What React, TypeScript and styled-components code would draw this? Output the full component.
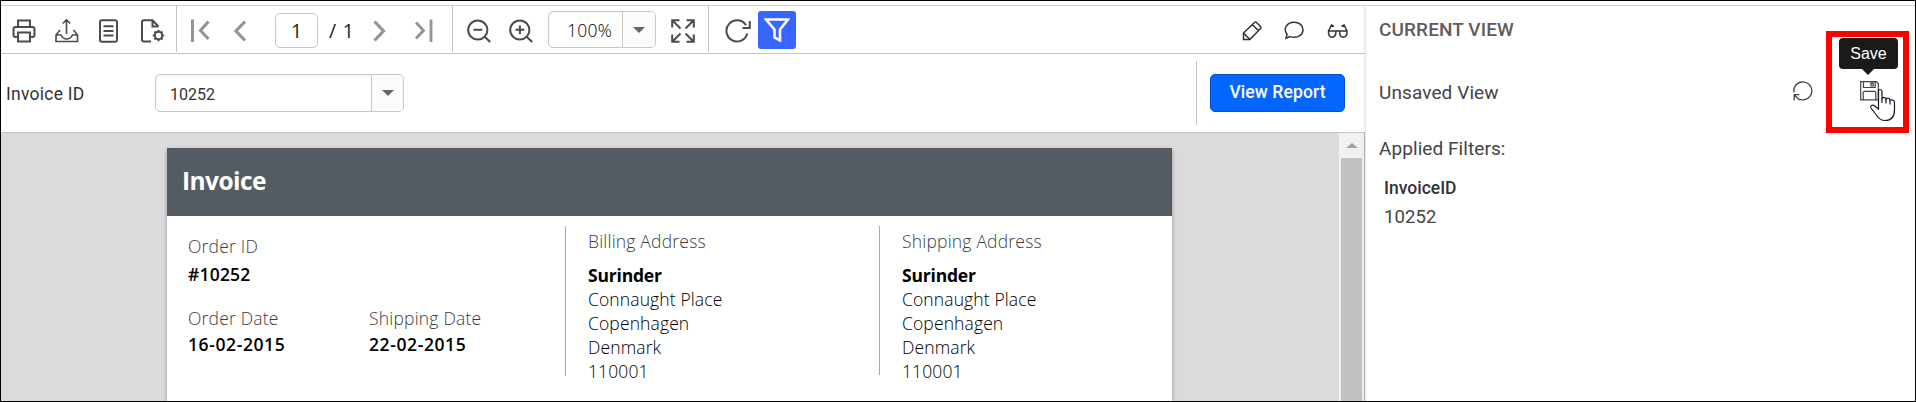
import React from "react";
import styled, { createGlobalStyle, css } from "styled-components";

const Global = createGlobalStyle`
  * { box-sizing: border-box; }
  body { margin: 0; background: #fff; }
`;

const roboto = `Roboto, "Liberation Sans", sans-serif`;
const humanist = `"Open Sans", "Noto Sans", sans-serif`;

const Frame = styled.div`
  position: relative; width: 1916px; height: 402px; border: 1px solid #000; padding-top: 4px;
  overflow: hidden; background: #fff; font-family: ${roboto};
`;
const Shell = styled.div`
  display: flex; height: 396px; border-top: 1px solid #d3d3d3;
`;
const Viewer = styled.main`
  width: 1364px; display: flex; flex-direction: column; flex: none;
`;
const Toolbar = styled.div`
  height: 48px; border-bottom: 1px solid #c4c4c4; display: flex; align-items: flex-start;
`;
const Icon = styled.svg<{ $ml?: number; $mt?: number; $c?: string; $sw?: number }>`
  flex: none; display: block; fill: none;
  stroke: ${(p) => p.$c ?? "#4b4b4b"}; stroke-width: ${(p) => p.$sw ?? 2};
  margin-left: ${(p) => p.$ml ?? 0}px; margin-top: ${(p) => p.$mt ?? 0}px;
`;
const Separator = styled.span<{ $ml: number }>`
  width: 1px; height: 46px; background: #c4c4c4; margin-left: ${(p) => p.$ml}px; flex: none;
`;
const boxed = css`
  border: 1px solid #c8c8c8; border-radius: 5px; background: #fff; display: flex; flex: none;
`;
const PageBox = styled.div`
  ${boxed} width: 43px; height: 35px; margin: 7px 0 0 28px; justify-content: center;
`;
const Combo = styled.div<{ $w: number; $h: number; $ml: number; $mt: number; $pad: number }>`
  ${boxed} width: ${(p) => p.$w}px; height: ${(p) => p.$h}px; margin: ${(p) => p.$mt}px 0 0 ${(p) => p.$ml}px;
  padding-left: ${(p) => p.$pad}px; justify-content: space-between; overflow: hidden;
  box-shadow: inset 0 1px 2px rgba(0, 0, 0, 0.06);
`;
const ComboArrow = styled.span<{ $w: number }>`
  width: ${(p) => p.$w}px; border-left: 1px solid #c8c8c8; background: #fbfbfb;
  display: flex; align-items: center; justify-content: center;
  &::after { content: ""; border: 6px solid transparent; border-top-color: #666; border-bottom: 0; }
`;
const Txt = styled.span<{
  $size: number; $lh: number; $ls?: number; $w?: number; $c?: string;
  $humanist?: boolean; $mt?: number; $ml?: number; $bw?: number;
}>`
  display: block; white-space: nowrap; flex: none; align-self: flex-start;
  width: ${(p) => (p.$bw ? `${p.$bw}px` : "auto")};
  font-family: ${(p) => (p.$humanist ? humanist : roboto)};
  font-size: ${(p) => p.$size}px; line-height: ${(p) => p.$lh}px;
  letter-spacing: ${(p) => p.$ls ?? 0}px; font-weight: ${(p) => p.$w ?? 400};
  color: ${(p) => p.$c ?? "#333"};
  margin: ${(p) => p.$mt ?? 0}px 0 0 ${(p) => p.$ml ?? 0}px;
`;
const FilterButton = styled.button`
  width: 38px; height: 38px; margin: 5px 0 0 6px; padding: 0; border: 0; border-radius: 3px;
  background: #3665ff; display: flex; align-items: center; justify-content: center; flex: none;
`;
const ParamBar = styled.div`
  height: 79px; border-bottom: 1px solid #c4c4c4; display: flex; align-items: flex-start;
`;
const ParamRule = styled.span`
  width: 1px; height: 64px; background: #c4c4c4; margin: 7px 0 0 792px;
`;
const ReportButton = styled.button`
  width: 135px; height: 38px; margin: 20px 0 0 13px; padding: 0; border: 1px solid #0552cf; border-radius: 5px;
  background: #0565ff; display: flex; justify-content: center;
`;
const Canvas = styled.div`
  flex: 1; background: #dbdbdb; border-right: 1px solid #bdbdbd; display: flex; justify-content: space-between;
`;
const Sheet = styled.article`
  width: 1005px; margin: 15px 0 0 166px; background: #fff; box-shadow: 0 2px 4px rgba(0, 0, 0, 0.35);
`;
const SheetHead = styled.header`
  height: 68px; background: #555b63; display: flex; padding-left: 15px;
`;
const SheetBody = styled.div`
  display: flex; padding-top: 10px;
`;
const OrderCol = styled.div`
  width: 398px; padding: 8px 0 0 21px; display: flex; flex-direction: column;
`;
const Dates = styled.div`
  display: grid; grid-template-columns: 181px 1fr; margin-top: 19px;
`;
const AddressCol = styled.div<{ $w: number; $h: number }>`
  width: ${(p) => p.$w}px; height: ${(p) => p.$h}px; border-left: 1px solid #a8a8a8; padding-left: 22px;
`;
const Scrollbar = styled.div`
  width: 25px; background: #f1f1f1; display: flex; flex-direction: column; align-items: center;
  &::before { content: ""; margin: 10px 0; border: 6px solid transparent; border-bottom: 5px solid #a3a3a3; border-top: 0; }
`;
const Thumb = styled.span`
  width: 21px; flex: 1; background: #c1c1c1;
`;
const Panel = styled.aside`
  flex: 1; margin-left: 1px; padding-left: 13px; background: #fff; box-shadow: -1px 0 3px rgba(0, 0, 0, 0.15);
  display: flex; flex-direction: column; clip-path: inset(0 0 0 -4px);
`;
const ViewRow = styled.div`
  display: flex; align-items: flex-start; margin-top: 27px; height: 34px;
`;
const Highlight = styled.div`
  position: absolute; left: 1825px; top: 30px; width: 83px; height: 102px; border: 6px solid #fe0000;
`;
const Tooltip = styled.div`
  position: absolute; left: 1838px; top: 37px; width: 59px; height: 31px; border-radius: 4px; background: #1a1a1a;
  color: #fff; font: 16px/31px "Liberation Sans", Arial, sans-serif; text-align: center;
  &::after { content: ""; position: absolute; left: 23px; top: 31px; border: 6px solid transparent; border-top-color: #1a1a1a; border-bottom: 0; }
`;
const Cursor = styled.svg`
  position: absolute; left: 1867px; top: 86px;
`;

const Caption = ({ children, ls = 0.2, lh = 24, mt = 0 }: { children: string; ls?: number; lh?: number; mt?: number }) => (
  <Txt $humanist $size={17.5} $lh={lh} $ls={ls} $w={300} $c="#3c3c3c" $mt={mt}>{children}</Txt>
);
const Value = ({ children, ls = 0.6, lh = 24, mt = 0 }: { children: string; ls?: number; lh?: number; mt?: number }) => (
  <Txt $humanist $size={17.5} $lh={lh} $ls={ls} $w={600} $c="#000" $mt={mt}>{children}</Txt>
);

const Address = ({ title }: { title: string }) => (
  <>
    <Caption ls={0.2} mt={3}>{title}</Caption>
    <Txt $humanist $size={17.5} $lh={24} $ls={-0.2} $w={700} $c="#000" $mt={10}>Surinder</Txt>
    {["Connaught Place", "Copenhagen", "Denmark", "110001"].map((line) => (
      <Txt key={line} $humanist $size={17.5} $lh={24} $ls={0.12} $w={300} $c="#000">{line}</Txt>
    ))}
  </>
);

const Magnifier = ({ ml, plus }: { ml: number; plus?: boolean }) => (
  <Icon $ml={ml} $mt={13} width="24" height="24" viewBox="0 0 24 24">
    <circle cx="10.8" cy="11" r="9.6" />
    <path d={plus ? "M18 18L23.2 23M6.5 10.8H15.3M10.9 6.5V15.2" : "M18 18L23.2 23M6.5 10.8H15.3"} />
  </Icon>
);

export default function App() {
  return (
    <>
      <Global />
      <Frame>
        <Shell>
          <Viewer>
            <Toolbar>
              <Icon $ml={11} $mt={13} width="24" height="24" viewBox="0 0 24 24">
                <path d="M6 8V1.5H18V8M6 18H3.5Q1.5 18 1.5 16V10Q1.5 8 3.5 8H20.5Q22.5 8 22.5 10V16Q22.5 18 20.5 18H18M6 13.5H18V22.5H6Z" />
              </Icon>
              <Icon $ml={19} $mt={12} $sw={1.6} width="24" height="25" viewBox="0 0 24 25">
                <path d="M11.5 16V2M7.8 5.5L11.5 1.8L15.2 5.5M5 12L1 17V23.5H22.5V17L18.5 12M1 17H6Q8 21 11.7 21T17.5 17H22.5" />
              </Icon>
              <Icon $ml={20} $mt={13} width="20" height="24" viewBox="0 0 20 24">
                <rect x="1" y="1.2" width="17" height="21.6" rx="2" />
                <path d="M4.5 7.2H14.5M4.5 12H14.5M4.5 16.5H14.5" />
              </Icon>
              <Icon $ml={22} $mt={13} width="25" height="24" viewBox="0 0 25 24">
                <path d="M10 22.5H3Q1 22.5 1 20.5V3.2Q1 1.2 3 1.2H11.5L17.5 7.5M11.5 1.5V7.5H17.5" />
                <circle cx="17.5" cy="16.5" r="3.7" />
                <path d="M17.5 10.8V13M17.5 20V22.2M11.8 16.5H14M21 16.5H23.2M13.5 12.5L15 14M20 19L21.5 20.5M21.5 12.5L20 14M15 19L13.5 20.5" />
              </Icon>
              <Separator $ml={10} />
              <Icon $ml={12} $mt={13} $c="#949494" $sw={3} width="21" height="24" viewBox="0 0 21 24">
                <path d="M3.5 0.5V23M19.5 2.5L11.5 11.5L19.5 20" />
              </Icon>
              <Icon $ml={22} $mt={13} $c="#949494" $sw={3.2} width="15" height="24" viewBox="0 0 15 24">
                <path d="M13 2.5L4 12L13 21.5" />
              </Icon>
              <PageBox><Txt $humanist $size={19.5} $lh={34} $w={400} $c="#222">1</Txt></PageBox>
              <Txt $humanist $size={19.5} $lh={34} $ls={0.8} $w={400} $c="#222" $mt={8} $ml={11} $bw={27}>/ 1</Txt>
              <Icon $ml={15} $mt={13} $c="#949494" $sw={3.2} width="15" height="24" viewBox="0 0 15 24">
                <path d="M3.5 2.5L12.5 12L3.5 21.5" />
              </Icon>
              <Icon $ml={27} $mt={13} $c="#949494" $sw={2.8} width="21" height="24" viewBox="0 0 21 24">
                <path d="M3 3.5L10.5 11.5L3 19.5M18 0.5V23" />
              </Icon>
              <Separator $ml={18} />
              <Magnifier ml={14} />
              <Magnifier ml={18} plus />
              <Combo $w={108} $h={37} $ml={15} $mt={5} $pad={18}>
                <Txt $humanist $size={17.5} $lh={36} $ls={0.25} $w={300} $c="#000">100%</Txt>
                <ComboArrow $w={33} />
              </Combo>
              <Icon $ml={15} $mt={13} width="24" height="24" viewBox="0 0 24 24">
                <path d="M1.2 8.5V1.2H8.5M15.5 1.2H22.8V8.5M22.8 15.5V22.8H15.5M8.5 22.8H1.2V15.5M1.5 1.5L9.5 9.5M22.5 1.5L14.5 9.5M22.5 22.5L14.5 14.5M1.5 22.5L9.5 14.5" />
              </Icon>
              <Separator $ml={13} />
              <Icon $ml={16} $mt={13} width="27" height="24" viewBox="0 0 27 24">
                <path d="M21 6.2A10.6 10.6 0 1 0 22.3 14.5M24.8 2V9H17.5" />
              </Icon>
              <FilterButton>
                <Icon $c="#fff" $sw={2.6} width="26" height="24" viewBox="0 0 26 24">
                  <path d="M2 1.5H24L16 11.5V22.5L10.5 19.5V11.5Z" />
                </Icon>
              </FilterButton>
              <Icon $ml={446} $mt={14} $sw={1.5} $c="#333" width="21" height="21" viewBox="0 0 21 21">
                <path d="M1.5 13L12.5 2.5Q13.5 1.5 14.5 2.5L18.5 6.5Q19.5 7.5 18.5 8.5L8 19.5H1.5ZM10.3 4.5L16.3 10.5M1.5 13L8 19.5" />
              </Icon>
              <Icon $ml={21} $mt={15} $sw={1.5} $c="#333" width="21" height="20" viewBox="0 0 21 20">
                <path d="M2 17.3L3 13.3C-1.5 7 3.5 1.2 10 1.2C15.5 1.2 19 4.5 19 8.7C19 13.5 14.5 16.3 10 16.3C8.5 16.3 7 16 6 15.6Z" />
              </Icon>
              <Icon $ml={22} $mt={15} $sw={1.5} $c="#333" width="22" height="20" viewBox="0 0 22 20">
                <path d="M1.5 10H9C9 14 8.2 16.2 5.3 16.2S1.3 14 1.5 10L4.5 4L7 5.3M20 10H12.5C12.5 14 13.3 16.2 16.2 16.2S20.2 14 20 10L17 4L14.5 5.3M9 10.3Q10.7 9 12.5 10.3" />
              </Icon>
            </Toolbar>
            <ParamBar>
              <Txt $size={17.5} $lh={38} $ls={0.25} $mt={21} $ml={5} $bw={78}>Invoice ID</Txt>
              <Combo $w={249} $h={38} $ml={71} $mt={20} $pad={14}>
                <Txt $size={16} $lh={38} $mt={1}>10252</Txt>
                <ComboArrow $w={32} />
              </Combo>
              <ParamRule />
              <ReportButton><Txt $size={17.5} $lh={34} $ls={0.1} $w={500} $c="#fff">View Report</Txt></ReportButton>
            </ParamBar>
            <Canvas>
              <Sheet>
                <SheetHead><Txt $humanist $size={24.5} $lh={65} $ls={-0.55} $w={700} $c="#fff">Invoice</Txt></SheetHead>
                <SheetBody>
                  <OrderCol>
                    <Caption>Order ID</Caption>
                    <Value ls={0.2} mt={4}>#10252</Value>
                    <Dates>
                      <div>
                        <Caption lh={26}>Order Date</Caption>
                        <Value lh={26}>16-02-2015</Value>
                      </div>
                      <div>
                        <Caption lh={26}>Shipping Date</Caption>
                        <Value lh={26}>22-02-2015</Value>
                      </div>
                    </Dates>
                  </OrderCol>
                  <AddressCol $w={314} $h={150}><Address title="Billing Address" /></AddressCol>
                  <AddressCol $w={293} $h={149}><Address title="Shipping Address" /></AddressCol>
                </SheetBody>
              </Sheet>
              <Scrollbar><Thumb /></Scrollbar>
            </Canvas>
          </Viewer>
          <Panel>
            <Txt $size={19} $lh={24} $ls={0.1} $w={500} $c="#635b5b" $mt={12}>CURRENT VIEW</Txt>
            <ViewRow>
              <Txt $size={19} $lh={24} $ls={0.1} $c="#444" $mt={12} $bw={120}>Unsaved View</Txt>
              <Icon $ml={294} $mt={12} $sw={1.3} $c="#444" width="20" height="20" viewBox="0 0 20 20">
                <path d="M1 11.5A9 9 0 1 1 8 18.6M1.2 19.5V13.7H6.3M1.2 13.7L6 18.6H8" />
              </Icon>
              <Icon $ml={47} $mt={12} $sw={1.2} $c="#444" width="19" height="20" viewBox="0 0 19 20">
                <path d="M0.7 0.7H16.5L18.3 2.5V18.8H0.7ZM3.5 0.7V6.5H15.2V0.7M11 2.2H13.2V4.8H11ZM3.2 18.8V11.5L4.2 10.3H14.8L15.8 11.5V18.8" />
              </Icon>
            </ViewRow>
            <Txt $size={19} $lh={24} $ls={0.07} $c="#444" $mt={34}>Applied Filters:</Txt>
            <Txt $size={17.5} $lh={24} $w={500} $c="#333" $mt={15} $ml={5}>InvoiceID</Txt>
            <Txt $size={18.5} $lh={24} $ls={0.1} $c="#444" $mt={5} $ml={5}>10252</Txt>
          </Panel>
        </Shell>
        <Highlight />
        <Tooltip>Save</Tooltip>
        <Cursor width="28" height="36" viewBox="0 0 28 36" fill="#fff" stroke="#15152a" strokeWidth="1.2">
          <path d="M10.5 22V4.5Q10.5 2.5 12.2 2.5T14 4.5V11.5Q14.3 10.3 16 10.3Q17.8 10.5 18 12Q18.5 11 20 11Q22 11.2 22 13Q26.5 12.2 26.5 16V23Q26.5 33.5 17 33.5Q12 33.5 9 29L3 21Q2 19.5 3.5 18.5Q5.5 17.5 8 20Z" />
          <path d="M14 11V16M18 12V16.5M22 13V17.5" fill="none" />
        </Cursor>
      </Frame>
    </>
  );
}
